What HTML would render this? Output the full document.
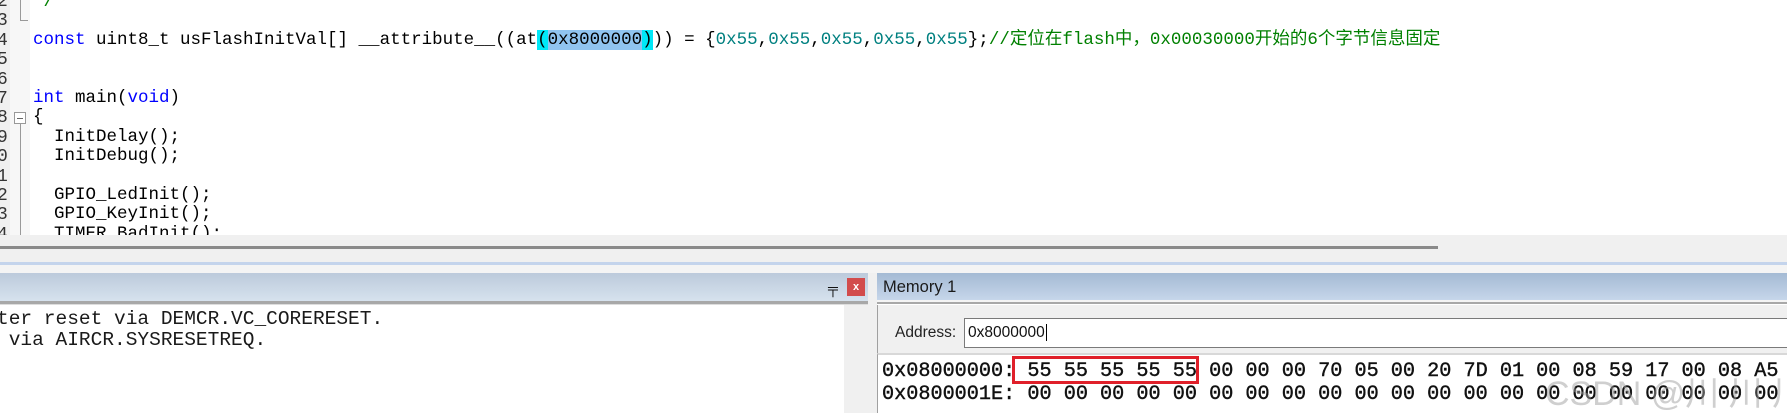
<!DOCTYPE html>
<html><head><meta charset="utf-8"><style>
*{margin:0;padding:0;box-sizing:border-box}
body{width:1787px;height:413px;overflow:hidden;background:#fff;position:relative;font-family:"Liberation Mono",monospace}
.abs{position:absolute}
.code{position:absolute;left:0;top:0;width:1787px;height:235px;background:#fff;overflow:hidden}
.ln{position:absolute;left:-3px;font-size:18px;color:#333;line-height:19.4px}
.cl{position:absolute;font-size:17.5px;line-height:19.4px;white-space:pre;color:#000;font-family:"Liberation Mono","Noto Sans CJK SC",monospace}
.kw{color:#0000ff}.num{color:#008080}.cm{color:#008000}
.hx{position:absolute;left:882px;font-size:20.2px;white-space:pre;color:#111;line-height:22px;font-weight:normal;-webkit-text-stroke:0.4px #111}
</style></head><body>
<div class="code">
  <div class="abs" style="left:0;top:0;width:10px;height:235px;background:#f0f0f0"></div>
  <div class="abs" style="left:10px;top:0;width:20px;height:235px;background:#f7f7f7"></div>
  <div class="ln" style="top:-7px">2<br>3<br>4<br>5<br>6<br>7<br>8<br>9<br>0<br>1<br>2<br>3<br>4</div>
  <div class="abs" style="left:20px;top:0;width:1px;height:20px;background:#999"></div>
  <div class="abs" style="left:20px;top:20px;width:8px;height:1px;background:#999"></div>
  <div class="abs" style="left:14px;top:112px;width:12px;height:12px;border:1px solid #999;background:#fff"></div>
  <div class="abs" style="left:17px;top:118px;width:6px;height:1px;background:#666"></div>
  <div class="abs" style="left:20px;top:124px;width:1px;height:111px;background:#999"></div>
  <div class="cl cm" style="left:33px;top:-7px">*/</div>
  <div class="cl" style="left:33px;top:31px"><span class="kw">const</span> uint8_t usFlashInitVal[] __attribute__((at<span style="background:#00e8f8">(</span><span style="background:#90c4f0">0x8000000</span><span style="background:#00e8f8">)</span>)) = {<span class="num">0x55</span>,<span class="num">0x55</span>,<span class="num">0x55</span>,<span class="num">0x55</span>,<span class="num">0x55</span>};<span class="cm">//定位在flash中，0x00030000开始的6个字节信息固定</span></div>
  <div class="cl" style="left:33px;top:89px"><span class="kw">int</span> main(<span class="kw">void</span>)</div>
  <div class="cl" style="left:33px;top:108px">{</div>
  <div class="cl" style="left:33px;top:128px">  InitDelay();</div>
  <div class="cl" style="left:33px;top:147px">  InitDebug();</div>
  <div class="cl" style="left:33px;top:186px">  GPIO_LedInit();</div>
  <div class="cl" style="left:33px;top:205px">  GPIO_KeyInit();</div>
  <div class="cl" style="left:33px;top:225px">  TIMER_BadInit();</div>
</div>
<div class="abs" style="left:0;top:235px;width:1787px;height:27px;background:#f0f0f0"></div>
<div class="abs" style="left:0;top:246px;width:1438px;height:3px;background:#8a8a8a"></div>
<div class="abs" style="left:0;top:262px;width:1787px;height:3px;background:#c4d4ec"></div>
<div class="abs" style="left:0;top:265px;width:1787px;height:8px;background:#f4f4f4"></div>
<div class="abs" style="left:0;top:273px;width:873px;height:28px;background:linear-gradient(#bccadb,#d6e2ee)"></div>
<div class="abs" style="left:828px;top:280px;font-size:14px;font-family:'Liberation Sans',sans-serif;font-weight:bold;color:#111">&#x2564;</div>
<div class="abs" style="left:847px;top:278px;width:18px;height:18px;background:#d24c4c;color:#fff;font:bold 11px 'Liberation Sans',sans-serif;text-align:center;line-height:18px">x</div>
<div class="abs" style="left:0;top:301px;width:873px;height:4px;background:#a8a8a8;border-bottom:1px solid #ddd"></div>
<div class="abs" style="left:0;top:305px;width:844px;height:108px;background:#fff"></div>
<div class="abs" style="left:844px;top:305px;width:24px;height:108px;background:#f0f0f0"></div>
<div class="abs" style="left:868px;top:273px;width:9px;height:140px;background:#f0f0f0"></div>
<div class="abs" style="left:-3px;top:309px;font-size:19.5px;white-space:pre;line-height:21px;color:#1a1a1a">ter reset via DEMCR.VC_CORERESET.
 via AIRCR.SYSRESETREQ.</div>
<div class="abs" style="left:877px;top:273px;width:910px;height:27px;background:linear-gradient(#a4bad4,#c6d6ea)"></div>
<div class="abs" style="left:883px;top:278px;font:16.5px 'Liberation Sans',sans-serif;color:#1a1a1a">Memory 1</div>
<div class="abs" style="left:877px;top:300px;width:910px;height:4px;background:#f4f4f4;border-bottom:2px solid #a8a8a8"></div>
<div class="abs" style="left:877px;top:305px;width:910px;height:50px;background:#f0f0f0;border-left:1px solid #a0a0a0"></div>
<div class="abs" style="left:895px;top:324px;font:15.5px 'Liberation Sans',sans-serif;color:#222">Address:</div>
<div class="abs" style="left:964px;top:318px;width:823px;height:30px;background:#fff;border:1px solid #7a7a7a;border-right:none"></div>
<div class="abs" style="left:968px;top:324px;font:15.5px 'Liberation Sans',sans-serif;color:#111">0x8000000<span style="border-left:1px solid #000;margin-left:1px"></span></div>
<div class="abs" style="left:877px;top:353px;width:910px;height:60px;background:#fff;border-top:2px solid #d8d8d8;border-left:1px solid #a0a0a0"></div>
<div class="hx" style="top:361px">0x08000000: 55 55 55 55 55 00 00 00 70 05 00 20 7D 01 00 08 59 17 00 08 A5 00</div>
<div class="hx" style="top:384px">0x0800001E: 00 00 00 00 00 00 00 00 00 00 00 00 00 00 00 00 00 00 00 00 00 00</div>
<div class="abs" style="left:1012px;top:356px;width:187px;height:28px;border:3px solid #e0202a"></div>
<div class="abs" style="left:1545px;top:366px;font:34px 'Liberation Sans',sans-serif;color:rgba(160,160,160,0.5);white-space:pre">CSDN @川 川 川</div>
</body></html>
